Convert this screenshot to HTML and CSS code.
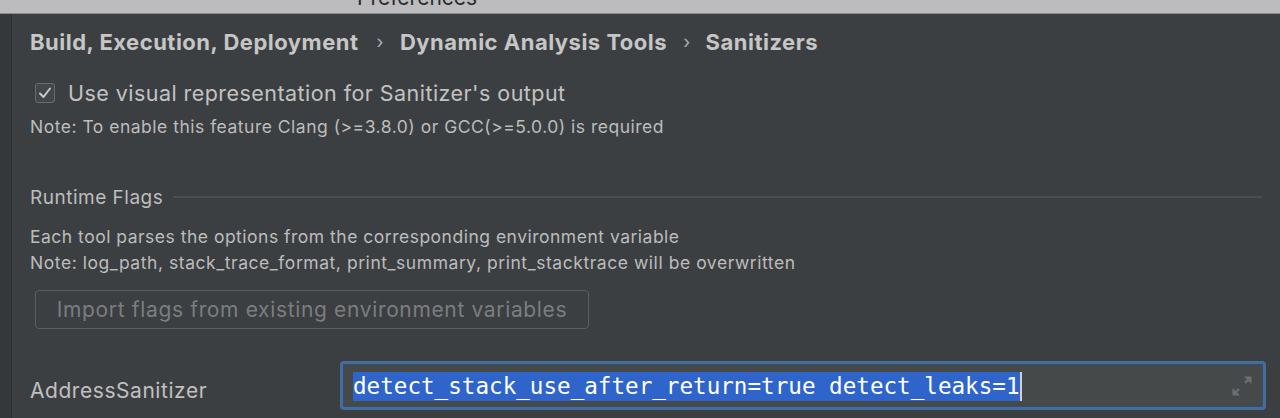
FILE: index.html
```html
<!DOCTYPE html>
<html>
<head>
<meta charset="utf-8">
<title>Preferences</title>
<link rel="stylesheet" href="styles.css">
</head>
<body>
<div class="titlebar"><span class="title">Preferences</span></div>
<div class="main">
  <div class="edge"></div>
  <div class="content">
    <div class="crumbs">
      <span>Build, Execution, Deployment</span>
      <span class="sep">›</span>
      <span>Dynamic Analysis Tools</span>
      <span class="sep">›</span>
      <span>Sanitizers</span>
    </div>
    <label class="check-row">
      <span class="checkbox">
        <svg width="14" height="14" viewBox="0 0 14 14"><path d="M2 7.5 L5.5 11 L12 2.5" fill="none" stroke="#c9c9c9" stroke-width="2" stroke-linecap="round" stroke-linejoin="round"/></svg>
      </span>
      <span class="check-label">Use visual representation for Sanitizer's output</span>
    </label>
    <div class="note note-first">Note: To enable this feature Clang (&gt;=3.8.0) or GCC(&gt;=5.0.0) is required</div>
    <div class="group-title"><span>Runtime Flags</span><span class="rule"></span></div>
    <div class="note note-a">Each tool parses the options from the corresponding environment variable</div>
    <div class="note note-b">Note: log_path, stack_trace_format, print_summary, print_stacktrace will be overwritten</div>
    <button class="btn" disabled>Import flags from existing environment variables</button>
    <div class="field-row">
      <span class="field-label">AddressSanitizer</span>
      <div class="field">
        <span class="value"><span class="sel">detect_stack_use_after_return=true detect_leaks=1</span><span class="caret"></span></span>
        <svg class="expand" width="22" height="22" viewBox="0 0 22 22">
          <path d="M13 1.5 H20.5 V9 Z" fill="#6c6f71"/>
          <path d="M18 4 L14 8" stroke="#6c6f71" stroke-width="2.4"/>
          <path d="M1.5 13 V20.5 H9 Z" fill="#6c6f71"/>
          <path d="M4 18 L8 14" stroke="#6c6f71" stroke-width="2.4"/>
        </svg>
      </div>
    </div>
  </div>
</div>
</body>
</html>
```
FILE: styles.css
```css
html, body {
  margin: 0;
  padding: 0;
  background: #3c3f41;
  overflow: hidden;
}
body {
  width: 1280px;
  height: 418px;
  font-family: Inter, Roboto, "Liberation Sans", sans-serif;
  color: #bbbbbb;
}
.titlebar {
  height: 13px;
  background: #bcbcbe;
  border-bottom: 1px solid #8c8c8e;
  overflow: hidden;
  padding-left: 357px;
}
.title {
  display: block;
  font-size: 21px;
  line-height: 21px;
  margin-top: -13px;
  color: #2a2a2a;
}
.main {
  display: flex;
  height: 404px;
}
.edge {
  width: 11px;
  background: #35383a;
  border-right: 1px solid #2e3031;
  flex: none;
}
.content {
  flex: 1;
  padding: 0 14px 0 18px;
  display: flex;
  flex-direction: column;
  align-items: flex-start;
}
.crumbs {
  margin-top: 14px;
  height: 28px;
  line-height: 28px;
  font-size: 22px;
  letter-spacing: 0.5px;
  font-weight: 700;
  color: #c6c6c6;
  display: flex;
  white-space: nowrap;
}
.crumbs .sep {
  font-weight: 400;
  font-size: 18px;
  margin: 0 16px 0 18px;
  color: #b0b0b0;
}
.crumbs .sep:nth-child(4) {
  margin: 0 15px 0 16px;
}
.check-row {
  margin-top: 23px;
  height: 28px;
  display: flex;
  align-items: center;
  margin-left: 5px;
}
.checkbox {
  width: 20px;
  height: 20px;
  box-sizing: border-box;
  border: 1px solid #6b6b6b;
  border-radius: 3px;
  background: #43474a;
  display: flex;
  align-items: center;
  justify-content: center;
  margin-right: 13px;
}
.check-label {
  font-size: 21.5px;
  letter-spacing: 0.45px;
  line-height: 28px;
  color: #c2c2c2;
  white-space: nowrap;
}
.note {
  font-size: 17.5px;
  letter-spacing: 0.5px;
  line-height: 20px;
  white-space: nowrap;
  color: #bcbcbc;
}
.note-first { margin-top: 10px; }
.group-title {
  margin-top: 48px;
  height: 24px;
  display: flex;
  align-items: center;
  align-self: stretch;
  font-size: 19px;
  letter-spacing: 0.5px;
  color: #bdbdbd;
  margin-right: 4px;
}
.group-title .rule {
  flex: 1;
  height: 2px;
  background: #4b4e50;
  margin-left: 10px;
}
.note-a { margin-top: 18px; }
.note-b { margin-top: 6px; letter-spacing: 0.55px; }
.btn {
  margin-top: 17px;
  margin-left: 5px;
  width: 554px;
  height: 39px;
  border: 1px solid #5c5f61;
  border-radius: 4px;
  background: #3c3f41;
  color: #7b7d7f;
  font-family: Inter, Roboto, "Liberation Sans", sans-serif;
  font-size: 21px;
  letter-spacing: 0.65px;
  padding: 0;
}
.field-row {
  margin-top: 32px;
  display: flex;
  align-items: center;
  align-self: stretch;
}
.field-label {
  width: 310px;
  flex: none;
  font-size: 21px;
  letter-spacing: 0.55px;
  padding-top: 10px;
  color: #c0c0c0;
}
.field {
  flex: 1;
  height: 49px;
  box-sizing: border-box;
  border: 3px solid #466c99;
  border-radius: 4px;
  background: #45494a;
  display: flex;
  align-items: center;
  padding: 0 10px;
  box-shadow: inset 0 0 0 1px #2f4f73;
}
.value {
  flex: 1;
  display: flex;
  align-items: center;
  padding-top: 2px;
}
.sel {
  font-family: "DejaVu Sans Mono", "Liberation Mono", monospace;
  font-size: 22.6px;
  line-height: 29px;
  background: #2f65ca;
  color: #ffffff;
  white-space: nowrap;
}
.caret {
  width: 2px;
  height: 29px;
  background: #d0d0d0;
}
.expand {
  flex: none;
}
```
